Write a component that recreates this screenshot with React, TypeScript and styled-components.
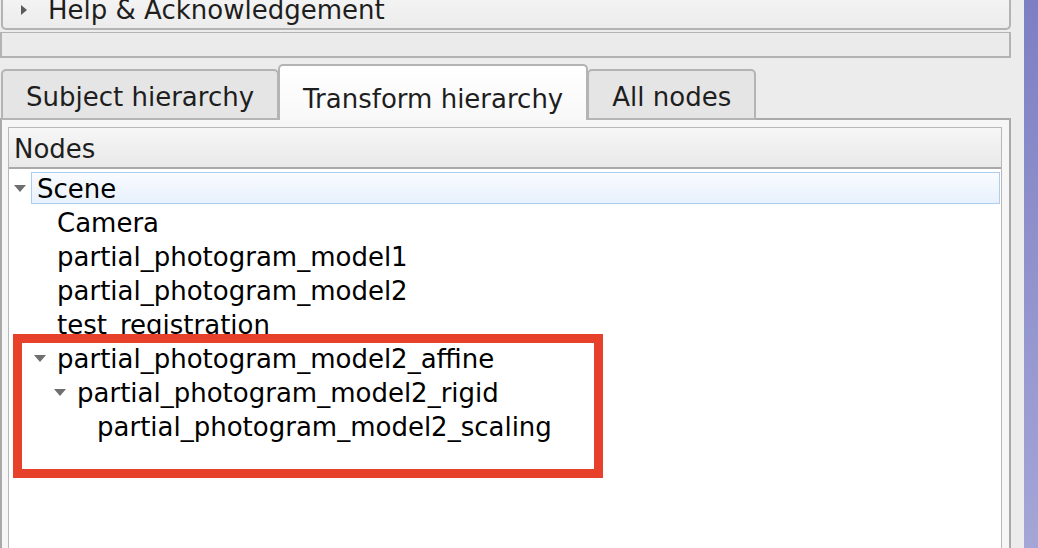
import React from 'react';
import styled, { createGlobalStyle } from 'styled-components';

const GlobalStyle = createGlobalStyle`
  html, body {
    margin: 0;
    padding: 0;
    background: #ececec;
    overflow: hidden;
  }
  body {
    font-family: "DejaVu Sans", "Noto Sans", sans-serif;
    color: #1c1c1c;
  }
`;

const Page = styled.div`
  position: relative;
  display: flex;
  width: 1038px;
  height: 548px;
  overflow: hidden;
`;

const Main = styled.div`
  display: flex;
  flex-direction: column;
  width: 1011px;
  height: 100%;
`;

const Gutter = styled.div`
  width: 13px;
  flex-shrink: 0;
`;

const Strip = styled.div`
  width: 14px;
  flex-shrink: 0;
  background: linear-gradient(to bottom, #7e7fc3, #a4a6d7);
`;

const HelpBar = styled.div`
  box-sizing: border-box;
  margin-top: -12px;
  margin-left: 1px;
  height: 42px;
  display: flex;
  align-items: center;
  gap: 21px;
  padding-left: 18px;
  padding-top: 3px;
  border: 2px solid #b3b3b3;
  border-top: none;
  border-radius: 0 0 5px 5px;
  background: linear-gradient(to bottom, #f6f6f6, #ececec);
  font-size: 26px;
  color: #1e1e1e;
`;

const SpacerBar = styled.div`
  box-sizing: border-box;
  margin-top: 2px;
  height: 26px;
  border: 2px solid #b3b3b3;
  border-top-width: 1px;
  background: #ebebeb;
`;

const TabRow = styled.div`
  display: flex;
  align-items: flex-end;
  height: 54px;
  margin-top: 8px;
  margin-bottom: -2px;
  position: relative;
  z-index: 1;
`;

const Tab = styled.div<{ $active?: boolean }>`
  box-sizing: border-box;
  height: ${p => (p.$active ? 56 : 51)}px;
  display: flex;
  align-items: flex-end;
  padding: 0 23px 6px;
  font-size: 26px;
  line-height: 30px;
  color: #1e1e1e;
  white-space: nowrap;
  border: 2px solid #b4b4b4;
  border-bottom: ${p => (p.$active ? 'none' : '2px solid #b4b4b4')};
  border-radius: 5px 5px 0 0;
  background: ${p => (p.$active ? 'linear-gradient(to bottom, #ffffff, #f8f8f8)' : '#e5e5e5')};
  margin-left: ${p => (p.$active ? -1 : 0)}px;
  margin-right: ${p => (p.$active ? -1 : 0)}px;
  z-index: ${p => (p.$active ? 2 : 1)};
  &:first-child {
    margin-left: 1px;
  }
`;

const Panel = styled.div`
  flex: 1;
  display: flex;
  flex-direction: column;
  padding: 7px 7px 0 6px;
  border: 2px solid #a9a9a9;
  border-bottom: none;
  background: #f6f6f6;
  min-height: 0;
`;

const TreeBox = styled.div`
  flex: 1;
  border: 1px solid #b8b8b8;
  border-bottom: none;
  background: #ffffff;
`;

const Header = styled.div`
  box-sizing: border-box;
  height: 41px;
  display: flex;
  align-items: center;
  padding-left: 5px;
  padding-top: 3px;
  border-bottom: 2px solid #a9a9a9;
  background: linear-gradient(to bottom, #f6f6f6, #e9e9e9);
  font-size: 26px;
  color: #1e1e1e;
`;

const Rows = styled.div`
  padding-top: 2px;
`;

const Row = styled.div<{ $level: number }>`
  height: 34px;
  display: flex;
  align-items: center;
  padding-left: ${p => 5 + p.$level * 20}px;
  padding-right: 1px;
`;

const Twisty = styled.span`
  width: 12px;
  flex-shrink: 0;
  display: flex;
  align-items: center;
  justify-content: center;
`;

const Label = styled.span<{ $selected?: boolean }>`
  box-sizing: border-box;
  height: 32px;
  display: flex;
  align-items: center;
  margin-left: 5px;
  padding: 1px 5px 0;
  font-size: 26px;
  color: #000;
  white-space: nowrap;
  border: 1px solid ${p => (p.$selected ? '#aecdf3' : 'transparent')};
  background: ${p => (p.$selected ? 'linear-gradient(to bottom, #f9fbff, #e8f1fc)' : 'transparent')};
  flex: ${p => (p.$selected ? 1 : '0 0 auto')};
`;

const Highlight = styled.div`
  position: absolute;
  left: 13px;
  top: 334px;
  width: 590px;
  height: 144px;
  box-sizing: border-box;
  border: 9px solid #e8412b;
  pointer-events: none;
`;

const DownArrow = () => (
  <svg width="12" height="7" viewBox="0 0 12 7">
    <polygon points="0,0 12,0 6,7" fill="#6f6f6f" />
  </svg>
);

const RightArrow = () => (
  <svg width="6" height="10" viewBox="0 0 6 10">
    <polygon points="0,0 6,5 0,10" fill="#5a5a5a" />
  </svg>
);

interface Node {
  name: string;
  level: number;
  expanded?: boolean;
  selected?: boolean;
}

const nodes: Node[] = [
  { name: 'Scene', level: 0, expanded: true, selected: true },
  { name: 'Camera', level: 1 },
  { name: 'partial_photogram_model1', level: 1 },
  { name: 'partial_photogram_model2', level: 1 },
  { name: 'test_registration', level: 1 },
  { name: 'partial_photogram_model2_affine', level: 1, expanded: true },
  { name: 'partial_photogram_model2_rigid', level: 2, expanded: true },
  { name: 'partial_photogram_model2_scaling', level: 3 },
];

export default function App() {
  return (
    <Page>
      <GlobalStyle />
      <Main>
        <HelpBar>
          <RightArrow />
          <span>Help &amp; Acknowledgement</span>
        </HelpBar>
        <SpacerBar />
        <TabRow>
          <Tab>Subject hierarchy</Tab>
          <Tab $active>Transform hierarchy</Tab>
          <Tab>All nodes</Tab>
        </TabRow>
        <Panel>
          <TreeBox>
            <Header>Nodes</Header>
            <Rows>
              {nodes.map(node => (
                <Row key={node.name} $level={node.level}>
                  <Twisty>{node.expanded && <DownArrow />}</Twisty>
                  <Label $selected={node.selected}>{node.name}</Label>
                </Row>
              ))}
            </Rows>
          </TreeBox>
        </Panel>
      </Main>
      <Gutter />
      <Strip />
      <Highlight />
    </Page>
  );
}
